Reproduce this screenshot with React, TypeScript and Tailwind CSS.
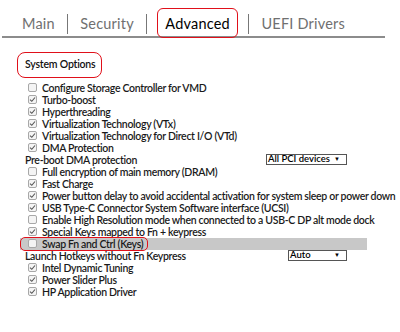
import { Fragment } from "react";

type Row =
  | { kind: "check"; label: string; checked: boolean; highlight?: boolean }
  | { kind: "select"; label: string; value: string; width: string; left: string };

const rows: Row[] = [
  { kind: "check", label: "Configure Storage Controller for VMD", checked: false },
  { kind: "check", label: "Turbo-boost", checked: true },
  { kind: "check", label: "Hyperthreading", checked: true },
  { kind: "check", label: "Virtualization Technology (VTx)", checked: true },
  { kind: "check", label: "Virtualization Technology for Direct I/O (VTd)", checked: true },
  { kind: "check", label: "DMA Protection", checked: true },
  { kind: "select", label: "Pre-boot DMA protection", value: "All PCI devices", width: "w-[81px]", left: "left-[266px]" },
  { kind: "check", label: "Full encryption of main memory (DRAM)", checked: false },
  { kind: "check", label: "Fast Charge", checked: true },
  { kind: "check", label: "Power button delay to avoid accidental activation for system sleep or power down", checked: true },
  { kind: "check", label: "USB Type-C Connector System Software interface (UCSI)", checked: true },
  { kind: "check", label: "Enable High Resolution mode when connected to a USB-C DP alt mode dock", checked: false },
  { kind: "check", label: "Special Keys mapped to Fn + keypress", checked: true },
  { kind: "check", label: "Swap Fn and Ctrl (Keys)", checked: false, highlight: true },
  { kind: "select", label: "Launch Hotkeys without Fn Keypress", value: "Auto", width: "w-[59px]", left: "left-[288px]" },
  { kind: "check", label: "Intel Dynamic Tuning", checked: true },
  { kind: "check", label: "Power Slider Plus", checked: true },
  { kind: "check", label: "HP Application Driver", checked: true },
];

function Box({ checked }: { checked: boolean }) {
  return (
    <span className="w-[9px] h-[9px] rounded-[2px] border border-[#a8a8a8] bg-[#f4f4f4] flex items-center justify-center shrink-0">
      {checked && (
        <svg width="7" height="7" viewBox="0 0 7 7" fill="none">
          <path d="M1 3.6 L2.8 5.3 L6 1.5" stroke="#555" strokeWidth="1.1" />
        </svg>
      )}
    </span>
  );
}

export default function App() {
  const tabs = ["Main", "Security", "Advanced", "UEFI Drivers"];
  return (
    <div className="w-[400px] h-[332px] bg-white overflow-hidden relative" style={{ fontFamily: "Lato, 'Open Sans', sans-serif" }}>
      <div className="ml-[2px] w-[383px] border-b-2 border-[#8c8c8c] h-[38px] flex items-end pb-[1px]">
        <div className="flex items-center pl-[20px] text-[14.5px] text-[#707070] tracking-[0.2px]">
          {tabs.map((t, i) => (
            <Fragment key={t}>
              {i > 0 && <span className="w-[1.5px] h-[20px] bg-[#777] mx-[12px]"></span>}
              {t === "Advanced" ? (
                <span className="relative text-black px-[6px]">
                  {t}
                  <span className="absolute -left-[2px] -right-[2px] -top-[5px] -bottom-[3px] border-[1.5px] border-[#e0101a] rounded-[6px]"></span>
                </span>
              ) : (
                <span>{t}</span>
              )}
            </Fragment>
          ))}
        </div>
      </div>

      <div className="mt-[19px] ml-[25px] relative w-fit text-[10.5px] text-[#111] font-semibold tracking-[-0.2px]">
        System Options
        <span className="absolute -left-[8px] -right-[7px] -top-[5px] -bottom-[5px] border-[1.5px] border-[#e0101a] rounded-[8px]"></span>
      </div>

      <div className="mt-[9px] text-[10.5px] leading-[12px] text-[#1a1a1a] font-semibold tracking-[-0.32px]">
        {rows.map((r) =>
          r.kind === "check" ? (
            r.highlight ? (
              <div key={r.label} className="relative flex items-center gap-[5px] h-[12px] ml-[20px] w-[347px] pl-[8px] bg-[#c8c8c8] whitespace-nowrap">
                <Box checked={r.checked} />
                <span>{r.label}</span>
                <span className="absolute left-0 -top-[1px] w-[128px] h-[14px] border-[1.5px] border-[#e0101a] rounded-[5px]"></span>
              </div>
            ) : (
              <div key={r.label} className="flex items-center gap-[5px] h-[12px] pl-[28px] whitespace-nowrap">
                <Box checked={r.checked} />
                <span>{r.label}</span>
              </div>
            )
          ) : (
            <div key={r.label} className="relative flex items-center h-[12px] pl-[25px] whitespace-nowrap">
              <span>{r.label}</span>
              <span
                className={`absolute top-[0px] ${r.left} ${r.width} h-[11px] border border-[#555] bg-white flex items-center justify-between pl-[1px] pr-[6px] text-[9.5px] font-semibold text-black tracking-normal`}
              >
                <span>{r.value}</span>
                <span className="text-[6px]">▼</span>
              </span>
            </div>
          )
        )}
      </div>
    </div>
  );
}
